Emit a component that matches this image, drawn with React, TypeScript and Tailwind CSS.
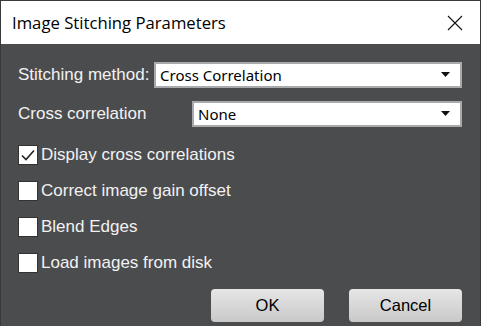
import React from 'react';

const Combo = ({ value, className }: { value: string; className: string }) => (
  <div
    className={`flex h-[26px] items-center justify-between border-2 border-[#a9aaab] bg-white pl-[4px] pr-[10px] text-[15px] text-black ${className}`}
    style={{ fontFamily: '"Noto Sans", "Open Sans", sans-serif' }}
  >
    <span className="leading-none">{value}</span>
    <svg width="9" height="6" viewBox="0 0 9 6">
      <path d="M0 0h9L4.5 5z" fill="#111" />
    </svg>
  </div>
);

const Check = ({ label, checked }: { label: string; checked?: boolean }) => (
  <div className="flex h-[20px] items-center">
    <div className="flex h-[20px] w-[20px] items-center justify-center border border-[#333] bg-white">
      {checked && (
        <svg width="14" height="12" viewBox="0 0 14 12">
          <path d="M1 6.5l4 4L13 1.5" stroke="#222" strokeWidth="1.6" fill="none" />
        </svg>
      )}
    </div>
    <span className="ml-[3px] text-[17px] text-[#f2f2f2]">{label}</span>
  </div>
);

const Btn = ({ label }: { label: string }) => (
  <button className="h-[33px] w-[113px] rounded-[4px] bg-gradient-to-b from-[#e6e6e6] to-[#c9c9c9] text-[16.5px] text-black">
    {label}
  </button>
);

export default function App() {
  return (
    <div
      className="flex h-[326px] w-[481px] flex-col border border-[#3a3a3a] border-b-0"
      style={{ fontFamily: '"Liberation Sans", Arial, sans-serif' }}
    >
      {/* title bar */}
      <div className="flex h-[43px] items-center justify-between bg-white pl-[11px] pr-[17px]">
        <span
          className="text-[16.7px] text-black"
          style={{ fontFamily: '"Open Sans", "Noto Sans", sans-serif' }}
        >
          Image Stitching Parameters
        </span>
        <svg width="16" height="16" viewBox="0 0 16 16">
          <path d="M1 1l14 14M15 1L1 15" stroke="#111" strokeWidth="1.1" />
        </svg>
      </div>

      {/* body */}
      <div className="flex flex-1 flex-col bg-[#4b4c4e] pl-[17px] pr-[18px] pt-[18px]">
        <div className="flex items-center">
          <span className="w-[136px] text-[17px] text-[#f2f2f2]">Stitching method:</span>
          <Combo value="Cross Correlation" className="flex-1" />
        </div>
        <div className="mt-[13px] flex items-center">
          <span className="w-[174px] text-[17px] text-[#f2f2f2]">Cross correlation</span>
          <Combo value="None" className="flex-1" />
        </div>

        <div className="mt-[18px] flex flex-col gap-[16px]">
          <Check label="Display cross correlations" checked />
          <Check label="Correct image gain offset" />
          <Check label="Blend Edges" />
          <Check label="Load images from disk" />
        </div>

        <div className="mt-[16px] flex justify-end gap-[25px]">
          <Btn label="OK" />
          <Btn label="Cancel" />
        </div>
      </div>
    </div>
  );
}
